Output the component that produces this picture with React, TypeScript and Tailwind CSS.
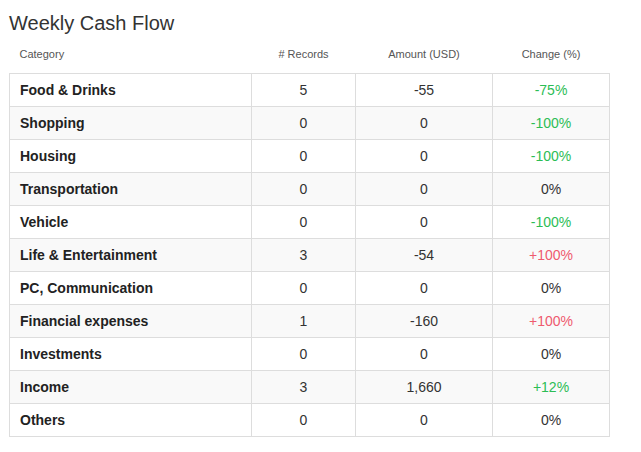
import React from 'react';

type Row = {
  category: string;
  records: number;
  amount: string;
  change: string;
};

const rows: Row[] = [
  { category: 'Food & Drinks', records: 5, amount: '-55', change: '-75%' },
  { category: 'Shopping', records: 0, amount: '0', change: '-100%' },
  { category: 'Housing', records: 0, amount: '0', change: '-100%' },
  { category: 'Transportation', records: 0, amount: '0', change: '0%' },
  { category: 'Vehicle', records: 0, amount: '0', change: '-100%' },
  { category: 'Life & Entertainment', records: 3, amount: '-54', change: '+100%' },
  { category: 'PC, Communication', records: 0, amount: '0', change: '0%' },
  { category: 'Financial expenses', records: 1, amount: '-160', change: '+100%' },
  { category: 'Investments', records: 0, amount: '0', change: '0%' },
  { category: 'Income', records: 3, amount: '1,660', change: '+12%' },
  { category: 'Others', records: 0, amount: '0', change: '0%' },
];

// spending going down is good (green), going up is bad (red); income up is green
const changeColor = (row: Row) => {
  if (row.change === '0%') return 'text-[#333]';
  if (row.category === 'Income') return row.change.startsWith('+') ? 'text-[#2cbd55]' : 'text-[#ef5a6f]';
  return row.change.startsWith('-') ? 'text-[#2cbd55]' : 'text-[#ef5a6f]';
};

export default function App() {
  return (
    <div className="w-[641px] h-[452px] bg-white px-[9px] pt-3 font-['Liberation_Sans',Arial,sans-serif] text-[#333]">
      <h2 className="text-[20px] leading-[22px] text-[#333]">Weekly Cash Flow</h2>

      <table className="w-[600px] table-fixed border-collapse">
        <colgroup>
          <col className="w-[242px]" />
          <col className="w-[104px]" />
          <col className="w-[137px]" />
          <col className="w-[117px]" />
        </colgroup>
        <thead>
          <tr className="h-[39px] text-[11px] text-[#555]">
            <th className="text-left font-normal pl-[10px] pt-[2px]">Category</th>
            <th className="text-center font-normal pt-[2px]"># Records</th>
            <th className="text-center font-normal pt-[2px]">Amount (USD)</th>
            <th className="text-center font-normal pt-[2px]">Change (%)</th>
          </tr>
        </thead>
        <tbody className="text-[14px]">
          {rows.map((row, i) => (
            <tr key={row.category} className={i % 2 === 1 ? 'bg-[#f9f9f9]' : 'bg-white'}>
              <td className="h-[33px] border border-[#dddddd] pl-[10px] pt-[2px] font-bold text-[#222]">{row.category}</td>
              <td className="h-[33px] border border-[#dddddd] pt-[2px] text-center">{row.records}</td>
              <td className="h-[33px] border border-[#dddddd] pt-[2px] text-center">{row.amount}</td>
              <td className={`h-[33px] border border-[#dddddd] pt-[2px] text-center ${changeColor(row)}`}>{row.change}</td>
            </tr>
          ))}
        </tbody>
      </table>
    </div>
  );
}
